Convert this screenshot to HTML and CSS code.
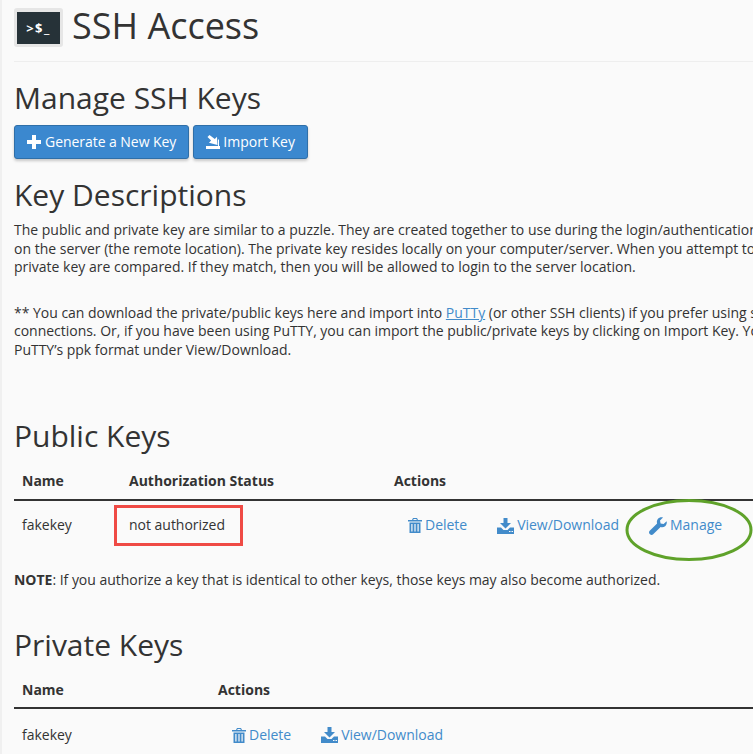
FILE: index.html
```html
<!DOCTYPE html>
<html lang="en">
<head>
    <meta charset="UTF-8">
    <meta name="viewport" content="width=device-width, initial-scale=1.0">
    <title>SSH Access</title>
    <link rel="stylesheet" href="styles.css">
</head>
<body>

<div class="page">
    <!-- Page header -->
    <div class="page-header">
        <div class="app-icon"><div class="app-icon-screen">&gt;$_</div></div>
        <h1>SSH Access</h1>
    </div>

    <h2 class="manage-title">Manage SSH Keys</h2>
    <div class="btn-row">
        <a class="btn btn-generate" href="#">
            <svg class="btn-icon" width="14" height="14" viewBox="0 0 14 14"><path fill="#fff" d="M5 0h4v5h5v4H9v5H5V9H0V5h5z"/></svg>
            Generate a New Key
        </a>
        <a class="btn" href="#">
            <svg class="btn-icon" width="14" height="14" viewBox="0 0 14 14"><path fill="#fff" d="M3.500 0L1.500 2l3.600 3.600L3 7.700 11.500 10 11 1.800 8.800 4zM12 4.500h1V11h-1zM0 11h14v3H0z"/></svg>
            Import Key
        </a>
    </div>

    <h2 class="desc-title">Key Descriptions</h2>
    <div class="copy">
        <p>The public and private key are similar to a puzzle. They are created together to use during the login/authentication process. The public key resides<br>
        on the server (the remote location). The private key resides locally on your computer/server. When you attempt to login, the public key and<br>
        private key are compared. If they match, then you will be allowed to login to the server location.</p>
        <p class="copy-second">** You can download the private/public keys here and import into <a href="#">PuTTy</a> (or other SSH clients) if you prefer using secure shell<br>
        connections. Or, if you have been using PuTTY, you can import the public/private keys by clicking on Import Key. You can convert to<br>
        PuTTY&rsquo;s ppk format under View/Download.</p>
    </div>

    <!-- Public keys -->
    <h2 class="public-title">Public Keys</h2>
    <table class="keys keys-public">
        <thead>
            <tr><th class="col-name">Name</th><th class="col-status">Authorization Status</th><th>Actions</th></tr>
        </thead>
        <tbody>
            <tr>
                <td>fakekey</td>
                <td><span class="status-mark">not authorized</span></td>
                <td>
                    <div class="actions">
                        <a class="action action-delete" href="#">
                            <svg width="14" height="15" viewBox="0 0 14 15"><path fill="#428bca" d="M5 0h4l1 2h4v1.500H0V2h4zM5.600 1l-.3 1h3.400l-.3-1zM1.500 4.500h11V15h-11zM3.300 6v7.500h1.200V6zM6.400 6v7.500h1.200V6zM9.500 6v7.500h1.200V6z" fill-rule="evenodd"/></svg>
                            Delete
                        </a>
                        <a class="action action-download" href="#">
                            <svg width="17" height="16" viewBox="0 0 17 16"><path fill="#428bca" d="M6.500 0h4v5H14L8.500 10.500 3 5h3.500zM0 9.500h4L6.500 12h4L13 9.500h4V16H0zM12 13v1h1.500v-1zM14.500 13v1H16v-1z" fill-rule="evenodd"/></svg>
                            View/Download
                        </a>
                        <a class="action action-manage" href="#">
                            <svg width="18" height="18" viewBox="0 0 18 18"><path fill="#428bca" d="M17.600 4.200c.5 2-.1 3.900-1.500 5-1.300 1-3 1.200-4.500.7L4.200 17.300c-.9.900-2.300.9-3.200 0l-.3-.3c-.9-.9-.9-2.300 0-3.200l7.400-7.400c-.5-1.500-.3-3.200.7-4.500C10 .5 12 -.1 14 .4l-3 3 .6 3 3 .6z"/></svg>
                            Manage
                        </a>
                    </div>
                </td>
            </tr>
        </tbody>
    </table>

    <p class="note"><strong>NOTE</strong>: If you authorize a key that is identical to other keys, those keys may also become authorized.</p>

    <!-- Private keys -->
    <h2 class="private-title">Private Keys</h2>
    <table class="keys keys-private">
        <thead>
            <tr><th class="col-name-wide">Name</th><th>Actions</th></tr>
        </thead>
        <tbody>
            <tr>
                <td>fakekey</td>
                <td>
                    <div class="actions">
                        <a class="action action-delete" href="#">
                            <svg width="14" height="15" viewBox="0 0 14 15"><path fill="#428bca" d="M5 0h4l1 2h4v1.500H0V2h4zM5.600 1l-.3 1h3.400l-.3-1zM1.500 4.500h11V15h-11zM3.300 6v7.500h1.200V6zM6.400 6v7.500h1.200V6zM9.500 6v7.500h1.200V6z" fill-rule="evenodd"/></svg>
                            Delete
                        </a>
                        <a class="action action-download" href="#">
                            <svg width="17" height="16" viewBox="0 0 17 16"><path fill="#428bca" d="M6.500 0h4v5H14L8.500 10.500 3 5h3.500zM0 9.500h4L6.500 12h4L13 9.500h4V16H0zM12 13v1h1.500v-1zM14.500 13v1H16v-1z" fill-rule="evenodd"/></svg>
                            View/Download
                        </a>
                    </div>
                </td>
            </tr>
        </tbody>
    </table>

    <!-- Hand drawn highlight around Manage -->
    <svg class="manage-ring" width="130" height="66" viewBox="0 0 130 66"><ellipse cx="65" cy="33" rx="62" ry="29.500" fill="none" stroke="#5fa22a" stroke-width="3"/></svg>
</div>

</body>
</html>
```

FILE: styles.css
```css
html, body {
    margin: 0;
    padding: 0;
    height: 754px;
    overflow: hidden;
}

body {
    font-family: "Open Sans", sans-serif;
    font-size: 14px;
    line-height: 18.6px;
    color: #333;
    background-color: #fafafa;
    border-left: 2px solid #f0f0f0;
}

.page {
    position: relative;
    width: 900px;
    padding-left: 12px;
}

h1, h2 {
    font-weight: 400;
    margin: 0;
    color: #333;
}

h1 {
    font-size: 36px;
    line-height: 50px;
    margin-bottom: 2px;
}

h2 {
    font-size: 30px;
    line-height: 40px;
}

a {
    color: #428bca;
    text-decoration: none;
}

.page-header {
    display: flex;
    align-items: center;
    gap: 9px;
    height: 53px;
    border-bottom: 1px solid #eee;
    padding-bottom: 8px;
}

.app-icon {
    width: 49px;
    height: 39px;
    margin-top: 2px;
    background-color: #e6e6e6;
    border-radius: 3px;
    padding: 4px 3px 3px;
    box-sizing: border-box;
}

.app-icon-screen {
    height: 100%;
    background-color: #263238;
    color: #fff;
    font-size: 13px;
    font-weight: 700;
    letter-spacing: 1.5px;
    line-height: 32px;
    text-align: center;
}

.manage-title {
    margin-top: 16px;
}

.btn-row {
    display: flex;
    gap: 4px;
    margin-top: 7px;
}

.btn {
    display: flex;
    align-items: center;
    gap: 3px;
    height: 34px;
    box-sizing: border-box;
    padding: 0 12px;
    background-color: #3b88cf;
    border: 1px solid #2f6fa8;
    border-radius: 3px;
    color: #fff;
    box-shadow: 0 2px 3px rgba(0, 0, 0, 0.2);
}

.btn-generate {
    gap: 4px;
    letter-spacing: -0.05px;
    padding-right: 12px;
}

.desc-title {
    margin-top: 16px;
}

.copy {
    margin-top: 6px;
    white-space: nowrap;
}

.copy p {
    margin: 0;
}

.copy a {
    text-decoration: underline;
}

.copy .copy-second {
    margin-top: 27px;
    letter-spacing: -0.02px;
}

.public-title {
    margin-top: 56px;
}

.keys {
    border-collapse: collapse;
    width: 739px;
    table-layout: fixed;
}

.keys th {
    text-align: left;
    font-weight: 700;
    padding: 4px 8px 0;
    height: 34px;
    border-bottom: 2px solid #333;
}

.keys td {
    padding: 0 8px;
    height: 50px;
    letter-spacing: -0.02px;
}

.col-name {
    width: 91px;
}

.col-status {
    width: 249px;
}

.col-name-wide {
    width: 180px;
}

.keys-public {
    margin-top: 5px;
}

.keys-private {
    margin-top: 4px;
}

.keys-private td {
    height: 52px;
}

.status-mark {
    position: relative;
}

.status-mark::after {
    content: "";
    position: absolute;
    left: -15px;
    right: -18px;
    top: -10px;
    bottom: -12px;
    border: 3px solid #ef4a45;
}

.actions {
    display: flex;
    align-items: center;
}

.action {
    display: flex;
    align-items: center;
    gap: 3px;
}

.action-delete {
    margin-left: 14px;
    margin-right: 30px;
}

.action-download {
    margin-right: 30px;
}

.action-manage {
    letter-spacing: 0;
}

.note {
    margin: 20px 0 0;
    letter-spacing: -0.02px;
}

.private-title {
    margin-top: 36px;
}

.manage-ring {
    position: absolute;
    left: 622px;
    top: 497px;
}
```
